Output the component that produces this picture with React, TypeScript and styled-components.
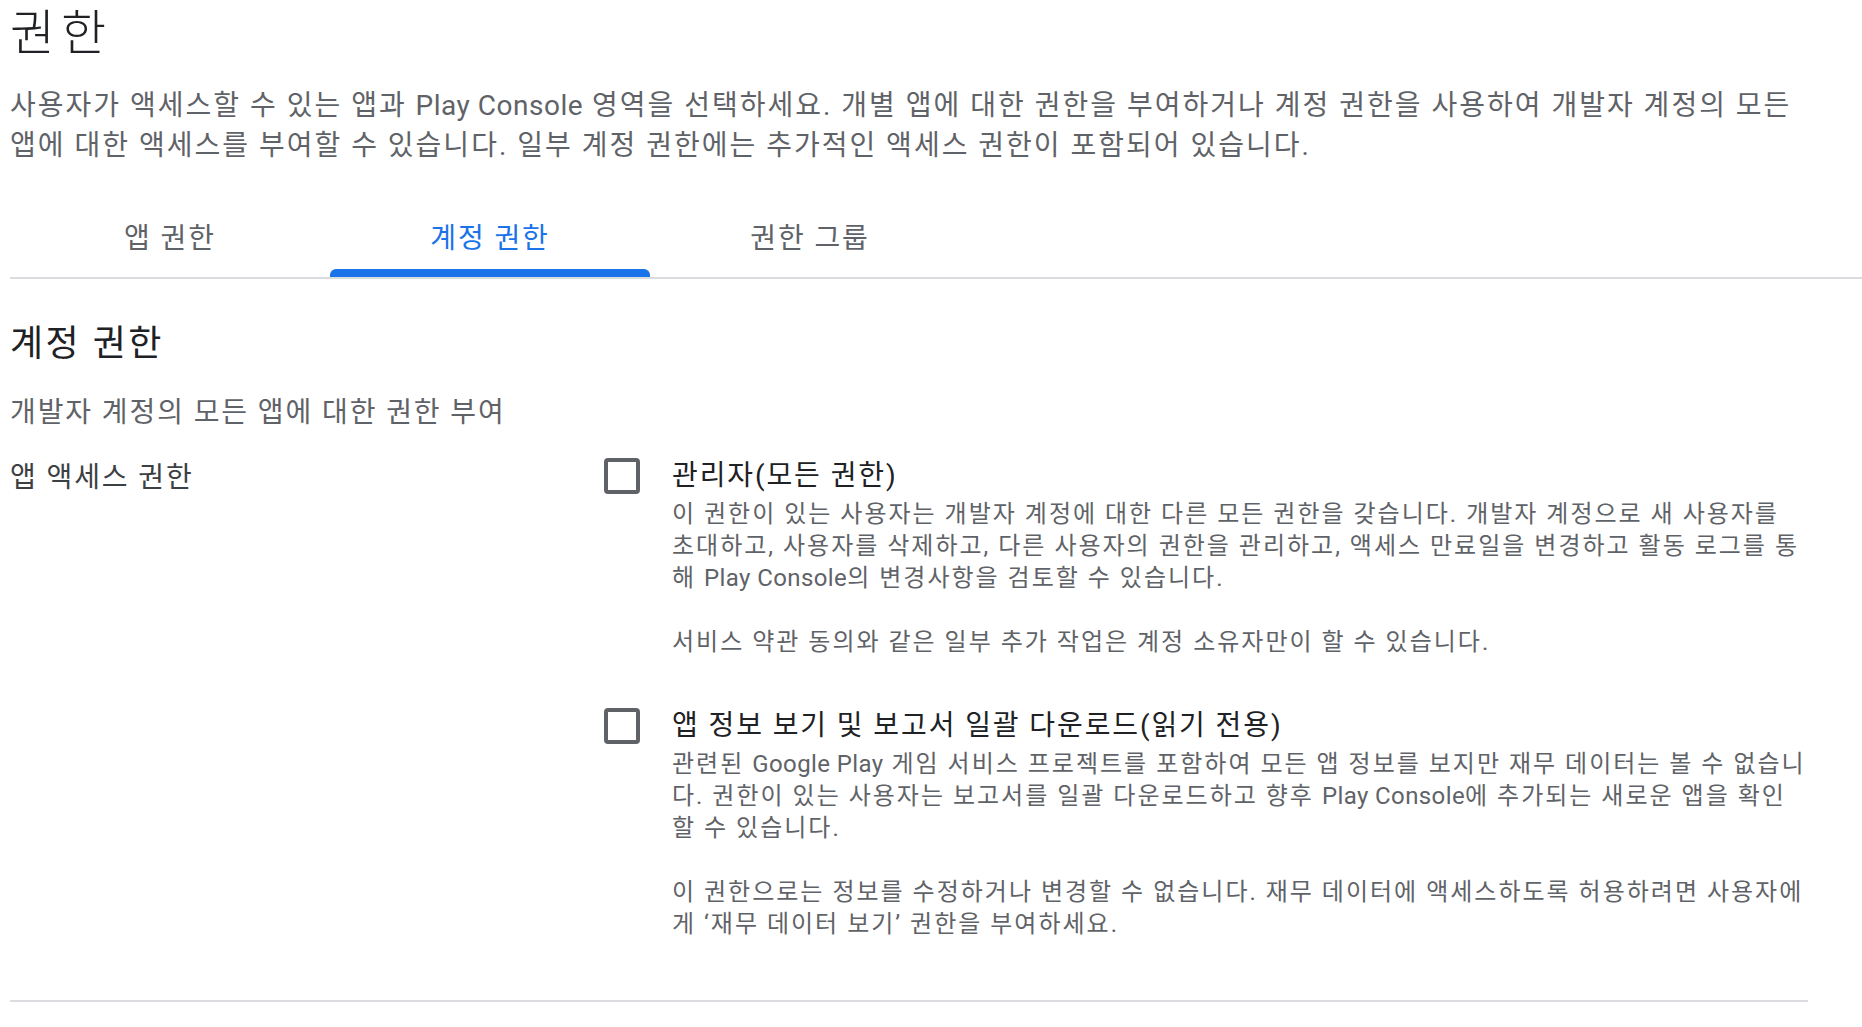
import styled, { createGlobalStyle } from 'styled-components';
import { Fragment, useState } from 'react';

const GlobalStyle = createGlobalStyle`
    html, body {
        margin: 0;
        padding: 0;
        background: #ffffff;
    }
    body {
        font-family: Roboto, "Noto Sans CJK KR", "Noto Sans", sans-serif;
        -webkit-font-smoothing: antialiased;
    }
`;

const Page = styled.div`
    padding-left: 10px;
    overflow: hidden;
`;

const Content = styled.div`
    width: 1798px;
`;

const Title = styled.h1`
    margin: 0;
    font-size: 49px;
    font-weight: 300;
    line-height: 68px;
    letter-spacing: 6px;
    color: #202124;
`;

const Latin = styled.span<{ $spacing: string }>`
    letter-spacing: ${({ $spacing }) => $spacing};
`;

const Intro = styled.p`
    margin: 18px 0 0;
    font-size: 28px;
    line-height: 40px;
    letter-spacing: 2px;
    color: #5f6368;
`;

const TabBar = styled.div`
    display: flex;
    margin-top: 31px;
    border-bottom: 2px solid #dadce0;
`;

const Tab = styled.button<{ $active?: boolean }>`
    position: relative;
    width: 320px;
    height: 80px;
    padding: 0 0 3px;
    border: 0;
    background: none;
    cursor: pointer;
    font-family: inherit;
    font-size: 28px;
    letter-spacing: 1.9px;
    color: ${({ $active }) => ($active ? '#1a73e8' : '#5f6368')};

    &::after {
        content: '';
        display: ${({ $active }) => ($active ? 'block' : 'none')};
        position: absolute;
        left: 0;
        right: 0;
        bottom: 0;
        height: 8px;
        border-radius: 6px 6px 0 0;
        background: #1a73e8;
    }
`;

const SectionTitle = styled.h2`
    margin: 41px 0 0;
    font-size: 36px;
    font-weight: 400;
    line-height: 48px;
    letter-spacing: 2.5px;
    color: #202124;
`;

const SubText = styled.div`
    margin-top: 25px;
    font-size: 28px;
    line-height: 40px;
    letter-spacing: 1.9px;
    color: #5f6368;
`;

const Row = styled.div`
    display: grid;
    grid-template-columns: 594px 1fr;
    margin-top: 23px;
    padding-bottom: 60px;
    border-bottom: 2px solid #dadce0;
`;

const RowLabel = styled.div`
    padding-top: 2px;
    font-size: 28px;
    line-height: 40px;
    letter-spacing: 1.9px;
    color: #3c4043;
`;

const Options = styled.div`
    display: flex;
    flex-direction: column;
    gap: 48px;
`;

const Option = styled.label`
    display: flex;
    align-items: flex-start;
    gap: 32px;
    cursor: pointer;
`;

const Box = styled.span<{ $checked: boolean }>`
    flex: none;
    box-sizing: border-box;
    width: 36px;
    height: 36px;
    margin-top: 2px;
    border: 4px solid ${({ $checked }) => ($checked ? '#1a73e8' : '#5f6368')};
    border-radius: 4px;
    background: ${({ $checked }) => ($checked ? '#1a73e8' : 'transparent')};
    display: flex;
    align-items: center;
    justify-content: center;
`;

const OptionText = styled.div`
    flex: 1;
    min-width: 0;
`;

const OptionTitle = styled.div`
    font-size: 28px;
    line-height: 40px;
    letter-spacing: 1.9px;
    color: #202124;
`;

const OptionDesc = styled.p`
    margin: 2px 0 0;
    font-size: 24px;
    line-height: 32px;
    letter-spacing: 2px;
    color: #5f6368;

    & + & {
        margin-top: 32px;
    }
`;

function Mixed({ text, spacing }: { text: string; spacing: string }) {
    const parts = text.split(/([A-Za-z]+(?: [A-Za-z]+)*)/);
    return (
        <>
            {parts.map((part, i) =>
                i % 2 === 1 ? (
                    <Latin key={i} $spacing={spacing}>
                        {part}
                    </Latin>
                ) : (
                    <Fragment key={i}>{part}</Fragment>
                ),
            )}
        </>
    );
}

type Permission = {
    id: string;
    title: string;
    paragraphs: string[];
};

const permissions: Permission[] = [
    {
        id: 'admin',
        title: '관리자(모든 권한)',
        paragraphs: [
            '이 권한이 있는 사용자는 개발자 계정에 대한 다른 모든 권한을 갖습니다. 개발자 계정으로 새 사용자를 초대하고, 사용자를 삭제하고, 다른 사용자의 권한을 관리하고, 액세스 만료일을 변경하고 활동 로그를 통해 Play Console의 변경사항을 검토할 수 있습니다.',
            '서비스 약관 동의와 같은 일부 추가 작업은 계정 소유자만이 할 수 있습니다.',
        ],
    },
    {
        id: 'view',
        title: '앱 정보 보기 및 보고서 일괄 다운로드(읽기 전용)',
        paragraphs: [
            '관련된 Google Play 게임 서비스 프로젝트를 포함하여 모든 앱 정보를 보지만 재무 데이터는 볼 수 없습니다. 권한이 있는 사용자는 보고서를 일괄 다운로드하고 향후 Play Console에 추가되는 새로운 앱을 확인할 수 있습니다.',
            '이 권한으로는 정보를 수정하거나 변경할 수 없습니다. 재무 데이터에 액세스하도록 허용하려면 사용자에게 ‘재무 데이터 보기’ 권한을 부여하세요.',
        ],
    },
];

const intro =
    '사용자가 액세스할 수 있는 앱과 Play Console 영역을 선택하세요. 개별 앱에 대한 권한을 부여하거나 계정 권한을 사용하여 개발자 계정의 모든 앱에 대한 액세스를 부여할 수 있습니다. 일부 계정 권한에는 추가적인 액세스 권한이 포함되어 있습니다.';

const tabs = ['앱 권한', '계정 권한', '권한 그룹'];

export default function App() {
    const [activeTab, setActiveTab] = useState(1);
    const [checked, setChecked] = useState<Record<string, boolean>>({});

    return (
        <Page>
            <GlobalStyle />
            <Content>
                <Title>권한</Title>
                <Intro>
                    <Mixed text={intro} spacing="0.5px" />
                </Intro>
            </Content>
            <TabBar>
                {tabs.map((t, i) => (
                    <Tab key={t} $active={i === activeTab} onClick={() => setActiveTab(i)}>
                        {t}
                    </Tab>
                ))}
            </TabBar>
            <Content>
                <SectionTitle>계정 권한</SectionTitle>
                <SubText>개발자 계정의 모든 앱에 대한 권한 부여</SubText>
                <Row>
                    <RowLabel>앱 액세스 권한</RowLabel>
                    <Options>
                        {permissions.map((p) => (
                            <Option key={p.id} onClick={() => setChecked((c) => ({ ...c, [p.id]: !c[p.id] }))}>
                                <Box $checked={!!checked[p.id]}>
                                    {checked[p.id] && (
                                        <svg width="24" height="24" viewBox="0 0 24 24">
                                            <path d="M4 12.5l5 5L20 6.5" fill="none" stroke="#fff" strokeWidth="3" />
                                        </svg>
                                    )}
                                </Box>
                                <OptionText>
                                    <OptionTitle>{p.title}</OptionTitle>
                                    {p.paragraphs.map((para) => (
                                        <OptionDesc key={para.slice(0, 12)}>
                                            <Mixed text={para} spacing="0.4px" />
                                        </OptionDesc>
                                    ))}
                                </OptionText>
                            </Option>
                        ))}
                    </Options>
                </Row>
            </Content>
        </Page>
    );
}
